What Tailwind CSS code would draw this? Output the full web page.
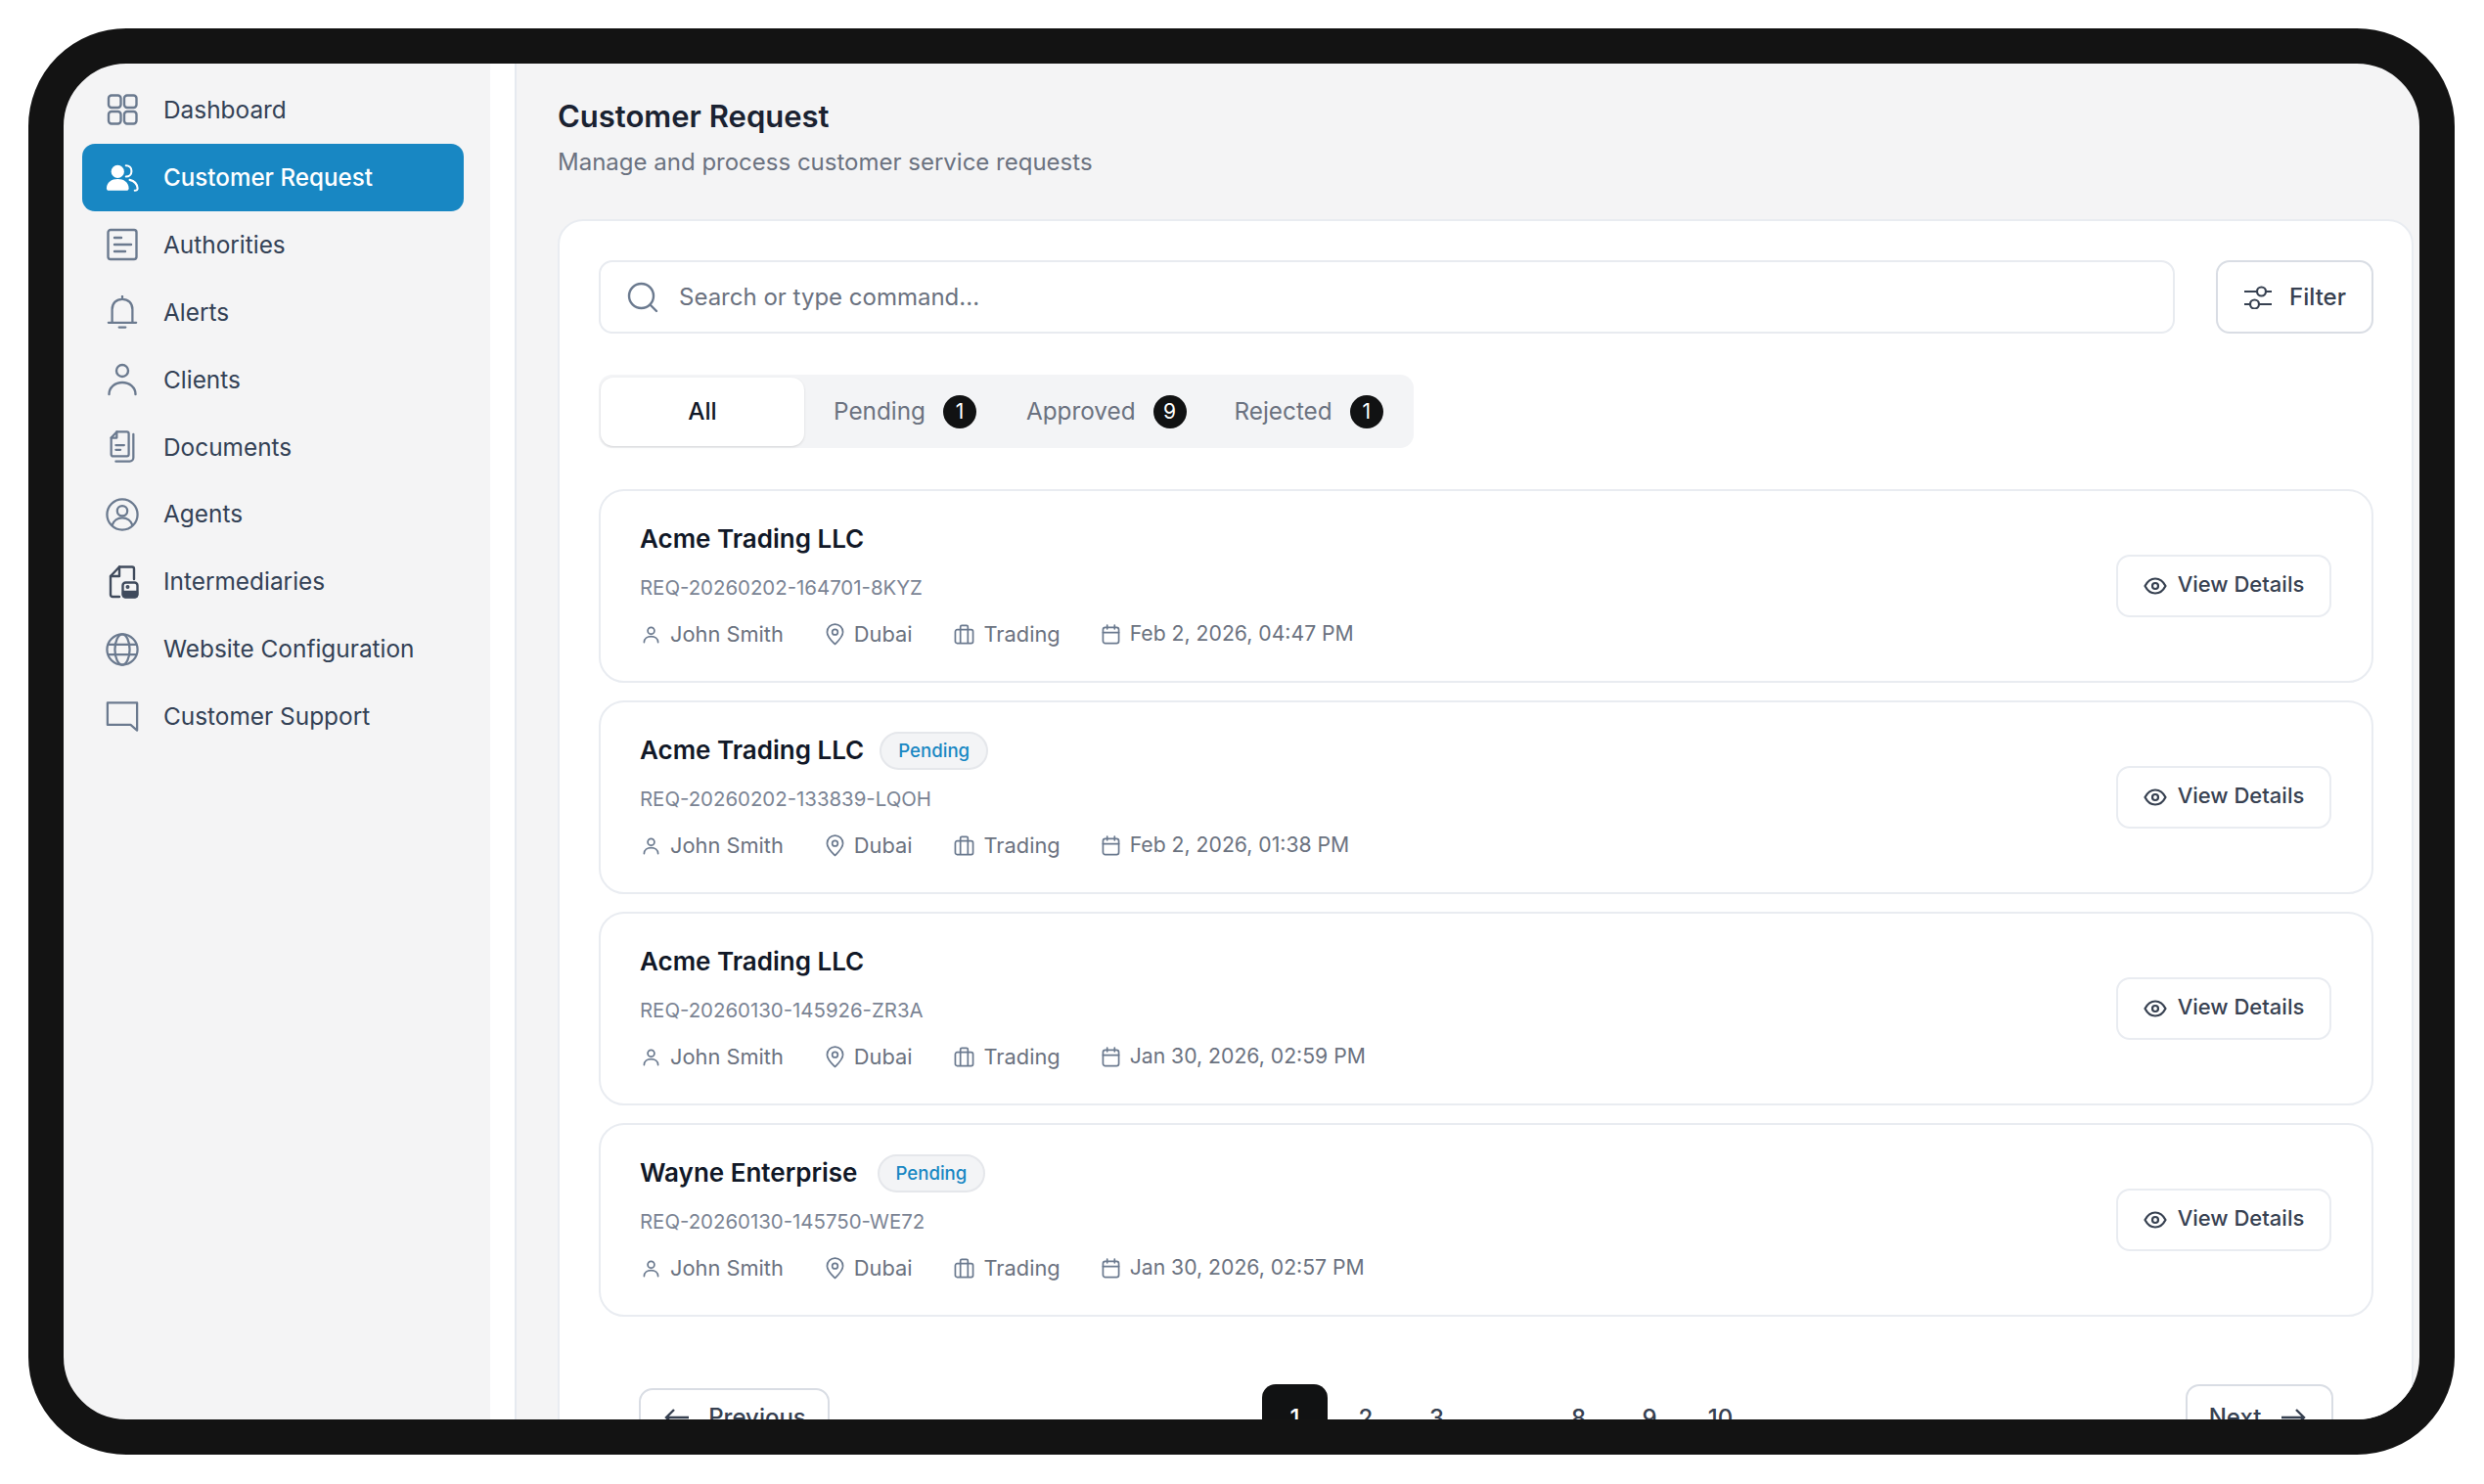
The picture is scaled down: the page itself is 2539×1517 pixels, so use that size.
<!DOCTYPE html>
<html lang="en">
<head>
    <meta charset="UTF-8">
    <title>Customer Request</title>
    <script src="https://cdn.jsdelivr.net/npm/@tailwindcss/browser@4"></script>
</head>
<body class="bg-white font-[Inter,sans-serif] h-[1517px] overflow-hidden">
    <svg class="hidden">
        <symbol id="i-user" viewBox="0 0 20 20"><circle cx="10" cy="6" r="3.6" fill="none" stroke="currentColor" stroke-width="1.8"/><path d="M2.5 18.5c0-4.2 3.4-6.3 7.5-6.3s7.500 2.100 7.500 6.300" fill="none" stroke="currentColor" stroke-width="1.800" stroke-linecap="round"/></symbol>
        <symbol id="i-pin" viewBox="0 0 20 24"><path d="M10 22.500C6 18.500 1.500 14.500 1.500 9.500a8.500 8.500 0 0 1 17 0c0 5-4.500 9-8.500 13z" fill="none" stroke="currentColor" stroke-width="1.800" stroke-linejoin="round"/><circle cx="10" cy="9.500" r="3" fill="none" stroke="currentColor" stroke-width="1.800"/></symbol>
        <symbol id="i-case" viewBox="0 0 22 22"><rect x="1.500" y="6" width="19" height="14.500" rx="2" fill="none" stroke="currentColor" stroke-width="1.800"/><path d="M7 6V3a1.500 1.500 0 0 1 1.500-1.500h5A1.500 1.500 0 0 1 15 3v3M7 6v14.500M15 6v14.500" fill="none" stroke="currentColor" stroke-width="1.800"/></symbol>
        <symbol id="i-cal" viewBox="0 0 20 22"><rect x="1.500" y="3.500" width="17" height="17" rx="2.500" fill="none" stroke="currentColor" stroke-width="1.800"/><path d="M1.500 9h17M6 1v4M14 1v4" fill="none" stroke="currentColor" stroke-width="1.800" stroke-linecap="round"/></symbol>
        <symbol id="i-eye" viewBox="0 0 24 18"><path d="M1.500 9C4 4.200 7.600 1.500 12 1.500S20 4.200 22.500 9C20 13.800 16.400 16.500 12 16.500S4 13.800 1.500 9z" fill="none" stroke="currentColor" stroke-width="2.200" stroke-linejoin="round"/><circle cx="12" cy="9" r="3" fill="none" stroke="currentColor" stroke-width="2.200"/></symbol>
    </svg>

    <div class="ml-[29px] mt-[29px] w-[2480px] h-[1458px] border-[36px] border-[#131313] rounded-[100px] overflow-hidden flex bg-[#f4f4f5]">
        <!-- Sidebar -->
        <aside class="w-[436px] shrink-0 pt-[13px] pl-[19px] pr-[27px] text-[24.4px] text-[#334155]">
            <a class="flex items-center h-[68.9px] pl-[24px] gap-[25px]">
                <svg class="w-[34px] h-[34px] shrink-0 text-[#6b7a8f]" viewBox="0 0 34 34" fill="none" stroke="currentColor" stroke-width="2.400"><rect x="3" y="2.500" width="12.500" height="12.500" rx="3"/><rect x="19" y="2.500" width="12.500" height="12.500" rx="3"/><rect x="3" y="19" width="12.500" height="12.500" rx="3"/><rect x="19" y="19" width="12.500" height="12.500" rx="3"/></svg>
                <span>Dashboard</span>
            </a>
            <a class="flex items-center h-[68.9px] pl-[24px] pt-[2px] gap-[25px] bg-[#1887c3] rounded-[13px] text-white text-[24.2px] font-medium">
                <svg class="w-[34px] h-[34px] shrink-0" viewBox="0 0 36 34"><circle cx="13" cy="10" r="7" fill="currentColor"/><path d="M1 28c0-6.500 5.500-10 12-10s12 3.500 12 10c0 1.500-1 2.500-2.500 2.500h-19C2 30.500 1 29.500 1 28z" fill="currentColor"/><path d="M22 3.500c3.500 0 6 2.500 6 6s-2.500 6-6 6M26 19c4.500 1 8 4 8.500 9 .2 1.800-1 2.500-3 2.500" fill="none" stroke="currentColor" stroke-width="2.200" stroke-linecap="round"/></svg>
                <span>Customer Request</span>
            </a>
            <a class="flex items-center h-[68.9px] pl-[24px] gap-[25px]">
                <svg class="w-[34px] h-[34px] shrink-0 text-[#6b7a8f]" viewBox="0 0 34 34" fill="none" stroke="currentColor" stroke-width="2.400" stroke-linecap="round"><rect x="2.500" y="2" width="29" height="30" rx="2.500"/><path d="M9 10h7M9 17h17M9 24h11"/></svg>
                <span>Authorities</span>
            </a>
            <a class="flex items-center h-[68.9px] pl-[24px] gap-[25px]">
                <svg class="w-[34px] h-[34px] shrink-0 text-[#6b7a8f]" viewBox="0 0 34 36" fill="none" stroke="currentColor" stroke-width="2.400" stroke-linecap="round"><path d="M6 29V15C6 8.500 10.500 4 17 4s11 4.500 11 11v14M2 29.500h30M13.500 34.500h7M17 1v2"/></svg>
                <span>Alerts</span>
            </a>
            <a class="flex items-center h-[68.9px] pl-[24px] gap-[25px]">
                <svg class="w-[34px] h-[34px] shrink-0 text-[#6b7a8f]" viewBox="0 0 34 34" fill="none" stroke="currentColor" stroke-width="2.400" stroke-linecap="round"><circle cx="17" cy="8" r="6"/><path d="M3.500 32c0-7 6-12 13.500-12s13.500 5 13.500 12"/></svg>
                <span>Clients</span>
            </a>
            <a class="flex items-center h-[68.9px] pl-[24px] gap-[25px]">
                <svg class="w-[34px] h-[34px] shrink-0 text-[#6b7a8f]" viewBox="0 0 34 36" fill="none" stroke="currentColor" stroke-width="2.400" stroke-linecap="round" stroke-linejoin="round"><path d="M11 1.500h11a2 2 0 0 1 2 2V26a2 2 0 0 1-2 2H7a2 2 0 0 1-2-2V8z"/><path d="M11 1.500V8H5M29 4v25.500a4 4 0 0 1-4 4H10M10 16h9M10 21h5"/></svg>
                <span>Documents</span>
            </a>
            <a class="flex items-center h-[68.9px] pl-[24px] gap-[25px]">
                <svg class="w-[34px] h-[34px] shrink-0 text-[#6b7a8f]" viewBox="0 0 36 36" fill="none" stroke="currentColor" stroke-width="2.400"><circle cx="18" cy="18" r="16.500"/><circle cx="18" cy="14" r="5.500"/><path d="M7 29.500c1.500-5 6-8 11-8s9.500 3 11 8"/></svg>
                <span>Agents</span>
            </a>
            <a class="flex items-center h-[68.9px] pl-[24px] gap-[25px]">
                <svg class="w-[34px] h-[34px] shrink-0 text-[#3f4a5c]" viewBox="0 0 34 34" fill="none" stroke="currentColor" stroke-width="2.400" stroke-linecap="round" stroke-linejoin="round"><path d="M14 32H7a2 2 0 0 1-2-2V11L14 1.500h13a2 2 0 0 1 2 2V14"/><path d="M14 1.500V11H5"/><rect x="17.500" y="17.500" width="15" height="15" rx="3" fill="#f4f4f5"/><path d="M18 27h14v3a2 2 0 0 1-2 2H20a2 2 0 0 1-2-2z" fill="currentColor"/><circle cx="22.500" cy="22" r=".8" fill="currentColor"/></svg>
                <span>Intermediaries</span>
            </a>
            <a class="flex items-center h-[68.9px] pl-[24px] gap-[25px]">
                <svg class="w-[34px] h-[34px] shrink-0 text-[#6b7a8f]" viewBox="0 0 36 36" fill="none" stroke="currentColor" stroke-width="2.400"><circle cx="18" cy="18" r="16.500"/><ellipse cx="18" cy="18" rx="8" ry="16.500"/><path d="M2.500 12.500h31M2.500 23.500h31"/></svg>
                <span>Website Configuration</span>
            </a>
            <a class="flex items-center h-[68.9px] pl-[24px] gap-[25px]">
                <svg class="w-[34px] h-[34px] shrink-0 text-[#6b7a8f]" viewBox="0 0 36 34" fill="none" stroke="currentColor" stroke-width="2.400" stroke-linejoin="round"><path d="M2 2.500h32v30l-7-6H2z"/></svg>
                <span>Customer Support</span>
            </a>
        </aside>

        <div class="w-[27px] shrink-0 bg-white border-r-2 border-[#e6eaf0]"></div>

        <!-- Main -->
        <main class="flex-1 min-w-0 pl-[42px] pr-[6px] pt-[34px]">
            <h1 class="h-[40px] leading-[40px] text-[31px] font-semibold text-[#1a2231]">Customer Request</h1>
            <p class="h-[36px] leading-[36px] mt-[9px] text-[24px] text-[#6b7280]">Manage and process customer service requests</p>

            <section class="mt-[40px] bg-white border-2 border-[#e9ecf1] rounded-[26px] pt-[40px] pl-[40px] pr-[39px] h-[1400px]">
                <!-- Search -->
                <div class="flex gap-[42px]">
                    <div class="flex-1 h-[75px] flex items-center pl-[27px] border-2 border-[#e8ebf0] rounded-[14px]">
                        <svg class="w-[32px] h-[32px] shrink-0 text-[#6b7a8f]" viewBox="0 0 32 32" fill="none" stroke="currentColor" stroke-width="2.400" stroke-linecap="round"><circle cx="14.500" cy="14.500" r="12.500"/><path d="M24 24l6 6"/></svg>
                        <input class="flex-1 ml-[21px] bg-transparent outline-none text-[24px] placeholder:text-[#6b7280]" placeholder="Search or type command...">
                    </div>
                    <button class="w-[161px] h-[75px] flex items-center justify-center gap-[17px] border-2 border-[#d9dde4] rounded-[14px] text-[24px] font-medium text-[#374151]">
                        <svg class="w-[30px] h-[24px] shrink-0" viewBox="0 0 30 24" fill="none" stroke="currentColor" stroke-width="2.200"><path d="M1 6h13M23 6h6M1 19h6M16 19h13"/><circle cx="18.500" cy="6" r="4.500"/><circle cx="11.500" cy="19" r="4.500"/></svg>
                        Filter
                    </button>
                </div>

                <!-- Tabs -->
                <div class="mt-[42px] w-[833px] h-[75px] flex items-center pl-[2px] bg-[#f3f4f6] rounded-[14px] text-[24.3px] text-[#6b7280]">
                    <div class="w-[208px] h-[70px] flex items-center justify-center bg-white rounded-[13px] font-medium text-[#111827] shadow-sm">All</div>
                    <div class="ml-[30px] flex items-center gap-[18px]">Pending <span class="w-[34px] h-[34px] flex items-center justify-center rounded-full bg-[#111213] text-white text-[21px]">1</span></div>
                    <div class="ml-[51px] flex items-center gap-[18px]">Approved <span class="w-[34px] h-[34px] flex items-center justify-center rounded-full bg-[#111213] text-white text-[21px]">9</span></div>
                    <div class="ml-[49px] flex items-center gap-[18px]">Rejected <span class="w-[34px] h-[34px] flex items-center justify-center rounded-full bg-[#111213] text-white text-[21px]">1</span></div>
                </div>

                <!-- Requests -->
                <div class="mt-[42px] flex flex-col gap-[18px]">
                    <div class="h-[198px] flex items-center justify-between pl-[40px] pr-[41px] border-2 border-[#e9ecf1] rounded-[26px]">
                        <div class="flex flex-col mb-[2px]">
                            <div class="h-[34px] flex items-center gap-[16px]"><span class="text-[26px] font-semibold text-[#111827]">Acme Trading LLC</span></div>
                            <div class="h-[34px] leading-[34px] mt-[17px] text-[20.4px] text-[#7b8494]">REQ-20260202-164701-8KYZ</div>
                            <div class="h-[30px] mt-[15px] flex items-center text-[21.8px] text-[#6b7280]">
                                <svg class="w-[19px] h-[19px] ml-[2px] text-[#6b7a8f]"><use href="#i-user"/></svg><span class="ml-[10px]">John Smith</span>
                                <svg class="w-[19px] h-[23px] ml-[43px] text-[#6b7a8f]"><use href="#i-pin"/></svg><span class="ml-[10px]">Dubai</span>
                                <svg class="w-[21px] h-[21px] ml-[42px] text-[#6b7a8f]"><use href="#i-case"/></svg><span class="ml-[10px]">Trading</span>
                                <svg class="w-[19px] h-[21px] ml-[42px] text-[#6b7a8f]"><use href="#i-cal"/></svg><span class="ml-[10px] text-[21.2px]">Feb 2, 2026, 04:47 PM</span>
                            </div>
                        </div>
                        <button class="w-[220px] h-[64px] flex items-center justify-center gap-[11px] border-2 border-[#e9ecf1] rounded-[14px] text-[22px] font-medium text-[#374151]"><svg class="w-[24px] h-[18px] shrink-0"><use href="#i-eye"/></svg><span class="mb-[4px]">View Details</span></button>
                    </div>
                    <div class="h-[198px] flex items-center justify-between pl-[40px] pr-[41px] border-2 border-[#e9ecf1] rounded-[26px]">
                        <div class="flex flex-col mb-[2px]">
                            <div class="h-[34px] flex items-center gap-[16px]"><span class="text-[26px] font-semibold text-[#111827]">Acme Trading LLC</span><span class="h-[39px] mt-[2px] px-[17px] pt-[2px] flex items-center rounded-full bg-[#f3f4f6] border-2 border-[#e5e7eb] text-[18.6px] font-medium text-[#1887c3]">Pending</span></div>
                            <div class="h-[34px] leading-[34px] mt-[17px] text-[20.4px] text-[#7b8494]">REQ-20260202-133839-LQOH</div>
                            <div class="h-[30px] mt-[15px] flex items-center text-[21.8px] text-[#6b7280]">
                                <svg class="w-[19px] h-[19px] ml-[2px] text-[#6b7a8f]"><use href="#i-user"/></svg><span class="ml-[10px]">John Smith</span>
                                <svg class="w-[19px] h-[23px] ml-[43px] text-[#6b7a8f]"><use href="#i-pin"/></svg><span class="ml-[10px]">Dubai</span>
                                <svg class="w-[21px] h-[21px] ml-[42px] text-[#6b7a8f]"><use href="#i-case"/></svg><span class="ml-[10px]">Trading</span>
                                <svg class="w-[19px] h-[21px] ml-[42px] text-[#6b7a8f]"><use href="#i-cal"/></svg><span class="ml-[10px] text-[21.2px]">Feb 2, 2026, 01:38 PM</span>
                            </div>
                        </div>
                        <button class="w-[220px] h-[64px] flex items-center justify-center gap-[11px] border-2 border-[#e9ecf1] rounded-[14px] text-[22px] font-medium text-[#374151]"><svg class="w-[24px] h-[18px] shrink-0"><use href="#i-eye"/></svg><span class="mb-[4px]">View Details</span></button>
                    </div>
                    <div class="h-[198px] flex items-center justify-between pl-[40px] pr-[41px] border-2 border-[#e9ecf1] rounded-[26px]">
                        <div class="flex flex-col mb-[2px]">
                            <div class="h-[34px] flex items-center gap-[16px]"><span class="text-[26px] font-semibold text-[#111827]">Acme Trading LLC</span></div>
                            <div class="h-[34px] leading-[34px] mt-[17px] text-[20.4px] text-[#7b8494]">REQ-20260130-145926-ZR3A</div>
                            <div class="h-[30px] mt-[15px] flex items-center text-[21.8px] text-[#6b7280]">
                                <svg class="w-[19px] h-[19px] ml-[2px] text-[#6b7a8f]"><use href="#i-user"/></svg><span class="ml-[10px]">John Smith</span>
                                <svg class="w-[19px] h-[23px] ml-[43px] text-[#6b7a8f]"><use href="#i-pin"/></svg><span class="ml-[10px]">Dubai</span>
                                <svg class="w-[21px] h-[21px] ml-[42px] text-[#6b7a8f]"><use href="#i-case"/></svg><span class="ml-[10px]">Trading</span>
                                <svg class="w-[19px] h-[21px] ml-[42px] text-[#6b7a8f]"><use href="#i-cal"/></svg><span class="ml-[10px] text-[21.2px]">Jan 30, 2026, 02:59 PM</span>
                            </div>
                        </div>
                        <button class="w-[220px] h-[64px] flex items-center justify-center gap-[11px] border-2 border-[#e9ecf1] rounded-[14px] text-[22px] font-medium text-[#374151]"><svg class="w-[24px] h-[18px] shrink-0"><use href="#i-eye"/></svg><span class="mb-[4px]">View Details</span></button>
                    </div>
                    <div class="h-[198px] flex items-center justify-between pl-[40px] pr-[41px] border-2 border-[#e9ecf1] rounded-[26px]">
                        <div class="flex flex-col mb-[2px]">
                            <div class="h-[34px] flex items-center gap-[20px]"><span class="text-[26px] font-semibold text-[#111827]">Wayne Enterprise</span><span class="h-[39px] mt-[2px] px-[17px] pt-[2px] flex items-center rounded-full bg-[#f3f4f6] border-2 border-[#e5e7eb] text-[18.6px] font-medium text-[#1887c3]">Pending</span></div>
                            <div class="h-[34px] leading-[34px] mt-[17px] text-[20.4px] text-[#7b8494]">REQ-20260130-145750-WE72</div>
                            <div class="h-[30px] mt-[15px] flex items-center text-[21.8px] text-[#6b7280]">
                                <svg class="w-[19px] h-[19px] ml-[2px] text-[#6b7a8f]"><use href="#i-user"/></svg><span class="ml-[10px]">John Smith</span>
                                <svg class="w-[19px] h-[23px] ml-[43px] text-[#6b7a8f]"><use href="#i-pin"/></svg><span class="ml-[10px]">Dubai</span>
                                <svg class="w-[21px] h-[21px] ml-[42px] text-[#6b7a8f]"><use href="#i-case"/></svg><span class="ml-[10px]">Trading</span>
                                <svg class="w-[19px] h-[21px] ml-[42px] text-[#6b7a8f]"><use href="#i-cal"/></svg><span class="ml-[10px] text-[21.2px]">Jan 30, 2026, 02:57 PM</span>
                            </div>
                        </div>
                        <button class="w-[220px] h-[64px] flex items-center justify-center gap-[11px] border-2 border-[#e9ecf1] rounded-[14px] text-[22px] font-medium text-[#374151]"><svg class="w-[24px] h-[18px] shrink-0"><use href="#i-eye"/></svg><span class="mb-[4px]">View Details</span></button>
                    </div>
                </div>

                <!-- Pagination -->
                <div class="mt-[69px] mx-[41px] flex justify-between items-start text-[24px] font-medium text-[#374151]">
                    <button class="w-[195px] h-[60px] mt-[4px] pl-[2px] flex items-center justify-center gap-[19px] border-2 border-[#d9dde4] rounded-[14px]"><svg class="w-[26px] h-[20px]" viewBox="0 0 26 20" fill="none" stroke="currentColor" stroke-width="2.400"><path d="M25 10H2M10 2l-8 8 8 8"/></svg>Previous</button>
                    <div class="flex gap-[5.500px]">
                        <span class="w-[67px] h-[69px] flex items-center justify-center rounded-[14px] bg-[#111213] text-white">1</span>
                        <span class="w-[67px] h-[69px] flex items-center justify-center">2</span>
                        <span class="w-[67px] h-[69px] flex items-center justify-center">3</span>
                        <span class="w-[67px] h-[69px] flex items-end justify-center">...</span>
                        <span class="w-[67px] h-[69px] flex items-center justify-center">8</span>
                        <span class="w-[67px] h-[69px] flex items-center justify-center">9</span>
                        <span class="w-[67px] h-[69px] flex items-center justify-center">10</span>
                    </div>
                    <button class="w-[151px] h-[68px] pr-[4px] flex items-center justify-center gap-[20px] border-2 border-[#d9dde4] rounded-[14px]">Next<svg class="w-[26px] h-[20px]" viewBox="0 0 26 20" fill="none" stroke="currentColor" stroke-width="2.400"><path d="M1 10h23M16 2l8 8-8 8"/></svg></button>
                </div>
            </section>
        </main>
    </div>
</body>
</html>
